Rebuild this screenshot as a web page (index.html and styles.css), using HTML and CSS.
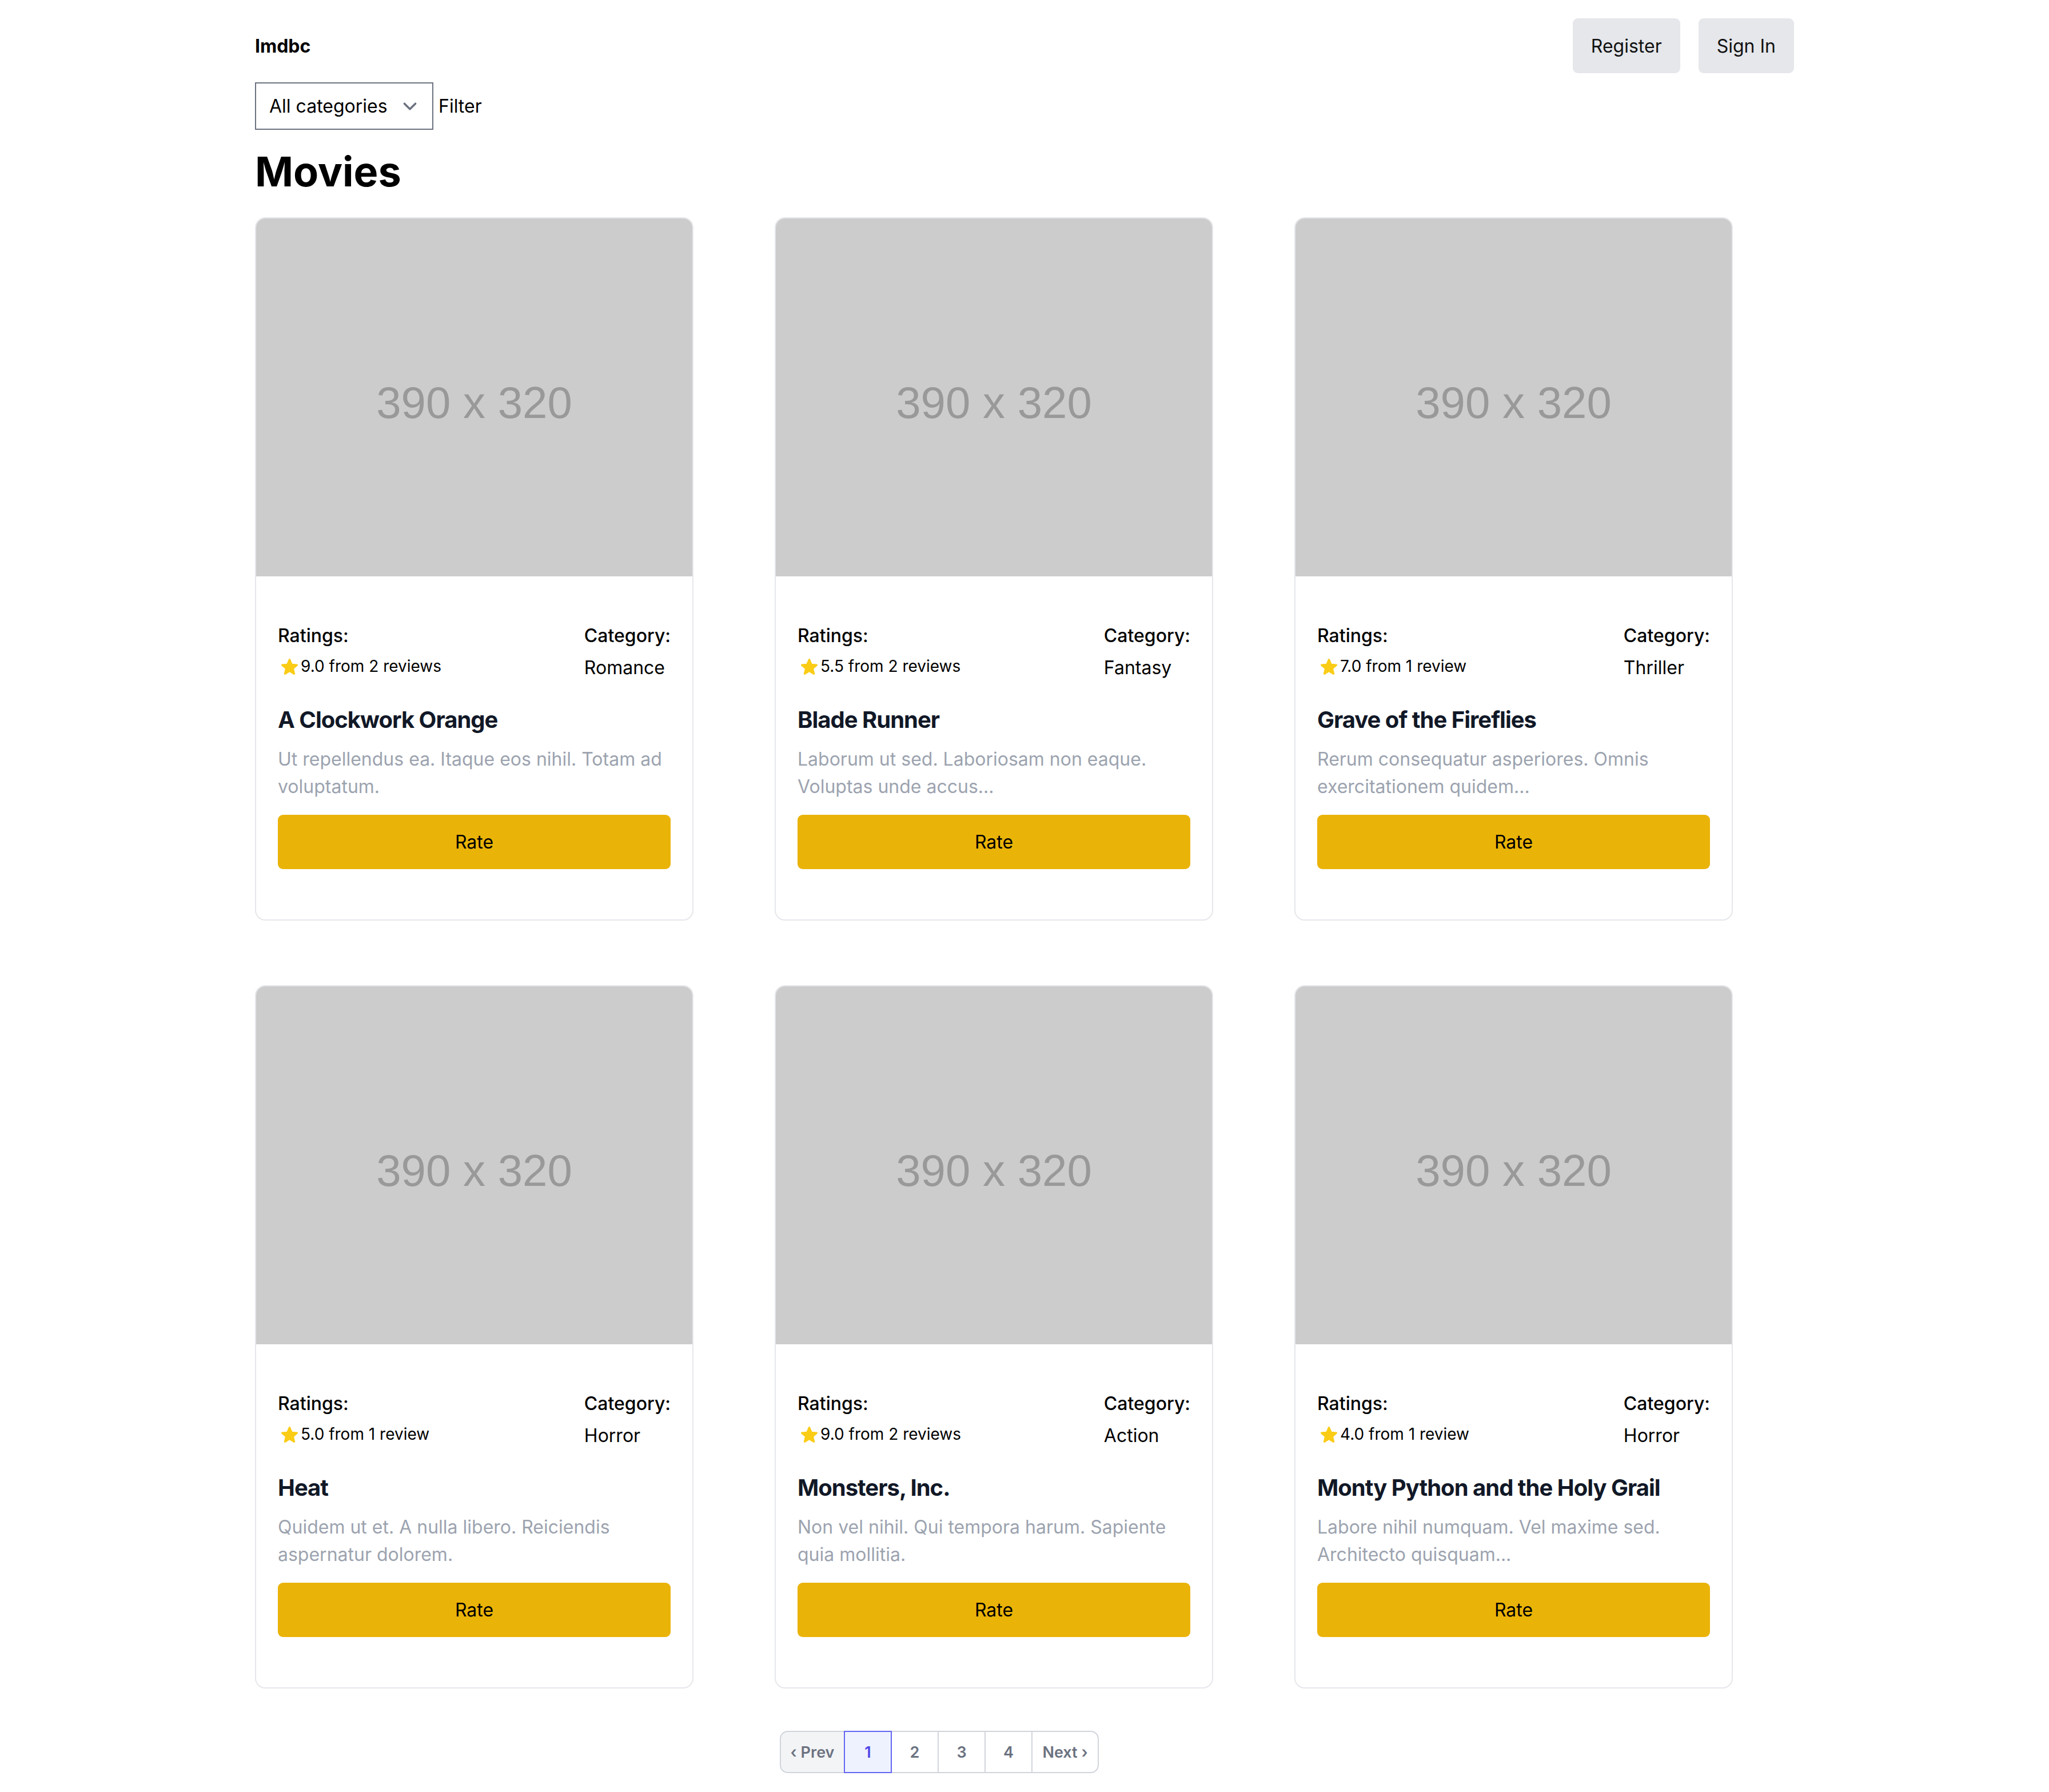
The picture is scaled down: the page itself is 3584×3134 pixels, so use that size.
FILE: index.html
```html
<!DOCTYPE html>
<html lang="en">
<head>
    <meta charset="UTF-8">
    <title>Imdbc</title>
    <link rel="stylesheet" href="styles.css">
</head>
<body>
    <div class="container">
        <div class="header">
            <div class="brand">Imdbc</div>
            <div class="auth">
                <button class="auth-btn">Register</button>
                <button class="auth-btn">Sign In</button>
            </div>
        </div>

        <form class="filter-row">
            <div class="select-wrap">
                <select class="category-select">
                    <option value="">All categories</option>
                    <option value="action">Action</option>
                    <option value="fantasy">Fantasy</option>
                    <option value="horror">Horror</option>
                    <option value="romance">Romance</option>
                    <option value="thriller">Thriller</option>
                </select>
                <svg class="chevron" viewBox="0 0 20 20" fill="none">
                    <path d="M6 8l4 4 4-4" stroke="#6b7280" stroke-width="1.5" stroke-linecap="round" stroke-linejoin="round"/>
                </svg>
            </div>
            <button type="button" class="filter-btn">Filter</button>
        </form>

        <h1 class="page-title">Movies</h1>

        <div class="movie-grid">
            <div class="movie-card">
                <div class="poster">390 x 320</div>
                <div class="card-body">
                    <div class="info">
                        <div>
                            <div class="label">Ratings:</div>
                            <div class="rating">
                                <svg class="star" viewBox="0 0 20 20"><path d="M10.868 2.884c-.321-.772-1.415-.772-1.736 0l-1.83 4.401-4.753.381c-.833.067-1.171 1.107-.536 1.651l3.62 3.102-1.106 4.637c-.194.813.691 1.456 1.405 1.02L10 15.591l4.069 2.485c.713.436 1.598-.207 1.404-1.020l-1.106-4.637 3.62-3.102c.635-.544.297-1.584-.536-1.65l-4.752-.382-1.831-4.401z"/></svg>
                                <span>9.0 from 2 reviews</span>
                            </div>
                        </div>
                        <div>
                            <div class="label">Category:</div>
                            <div class="category">Romance</div>
                        </div>
                    </div>
                    <h2 class="movie-title">A Clockwork Orange</h2>
                    <p class="movie-desc">Ut repellendus ea. Itaque eos nihil. Totam ad voluptatum.</p>
                    <button class="rate-btn">Rate</button>
                </div>
            </div>

            <div class="movie-card">
                <div class="poster">390 x 320</div>
                <div class="card-body">
                    <div class="info">
                        <div>
                            <div class="label">Ratings:</div>
                            <div class="rating">
                                <svg class="star" viewBox="0 0 20 20"><path d="M10.868 2.884c-.321-.772-1.415-.772-1.736 0l-1.83 4.401-4.753.381c-.833.067-1.171 1.107-.536 1.651l3.62 3.102-1.106 4.637c-.194.813.691 1.456 1.405 1.02L10 15.591l4.069 2.485c.713.436 1.598-.207 1.404-1.020l-1.106-4.637 3.62-3.102c.635-.544.297-1.584-.536-1.65l-4.752-.382-1.831-4.401z"/></svg>
                                <span>5.5 from 2 reviews</span>
                            </div>
                        </div>
                        <div>
                            <div class="label">Category:</div>
                            <div class="category">Fantasy</div>
                        </div>
                    </div>
                    <h2 class="movie-title">Blade Runner</h2>
                    <p class="movie-desc">Laborum ut sed. Laboriosam non eaque. Voluptas unde accus...</p>
                    <button class="rate-btn">Rate</button>
                </div>
            </div>

            <div class="movie-card">
                <div class="poster">390 x 320</div>
                <div class="card-body">
                    <div class="info">
                        <div>
                            <div class="label">Ratings:</div>
                            <div class="rating">
                                <svg class="star" viewBox="0 0 20 20"><path d="M10.868 2.884c-.321-.772-1.415-.772-1.736 0l-1.83 4.401-4.753.381c-.833.067-1.171 1.107-.536 1.651l3.62 3.102-1.106 4.637c-.194.813.691 1.456 1.405 1.02L10 15.591l4.069 2.485c.713.436 1.598-.207 1.404-1.020l-1.106-4.637 3.62-3.102c.635-.544.297-1.584-.536-1.65l-4.752-.382-1.831-4.401z"/></svg>
                                <span>7.0 from 1 review</span>
                            </div>
                        </div>
                        <div>
                            <div class="label">Category:</div>
                            <div class="category">Thriller</div>
                        </div>
                    </div>
                    <h2 class="movie-title">Grave of the Fireflies</h2>
                    <p class="movie-desc">Rerum consequatur asperiores. Omnis exercitationem quidem...</p>
                    <button class="rate-btn">Rate</button>
                </div>
            </div>

            <div class="movie-card">
                <div class="poster">390 x 320</div>
                <div class="card-body">
                    <div class="info">
                        <div>
                            <div class="label">Ratings:</div>
                            <div class="rating">
                                <svg class="star" viewBox="0 0 20 20"><path d="M10.868 2.884c-.321-.772-1.415-.772-1.736 0l-1.83 4.401-4.753.381c-.833.067-1.171 1.107-.536 1.651l3.62 3.102-1.106 4.637c-.194.813.691 1.456 1.405 1.02L10 15.591l4.069 2.485c.713.436 1.598-.207 1.404-1.020l-1.106-4.637 3.62-3.102c.635-.544.297-1.584-.536-1.65l-4.752-.382-1.831-4.401z"/></svg>
                                <span>5.0 from 1 review</span>
                            </div>
                        </div>
                        <div>
                            <div class="label">Category:</div>
                            <div class="category">Horror</div>
                        </div>
                    </div>
                    <h2 class="movie-title">Heat</h2>
                    <p class="movie-desc">Quidem ut et. A nulla libero. Reiciendis aspernatur dolorem.</p>
                    <button class="rate-btn">Rate</button>
                </div>
            </div>

            <div class="movie-card">
                <div class="poster">390 x 320</div>
                <div class="card-body">
                    <div class="info">
                        <div>
                            <div class="label">Ratings:</div>
                            <div class="rating">
                                <svg class="star" viewBox="0 0 20 20"><path d="M10.868 2.884c-.321-.772-1.415-.772-1.736 0l-1.83 4.401-4.753.381c-.833.067-1.171 1.107-.536 1.651l3.62 3.102-1.106 4.637c-.194.813.691 1.456 1.405 1.02L10 15.591l4.069 2.485c.713.436 1.598-.207 1.404-1.020l-1.106-4.637 3.62-3.102c.635-.544.297-1.584-.536-1.65l-4.752-.382-1.831-4.401z"/></svg>
                                <span>9.0 from 2 reviews</span>
                            </div>
                        </div>
                        <div>
                            <div class="label">Category:</div>
                            <div class="category">Action</div>
                        </div>
                    </div>
                    <h2 class="movie-title">Monsters, Inc.</h2>
                    <p class="movie-desc">Non vel nihil. Qui tempora harum. Sapiente quia mollitia.</p>
                    <button class="rate-btn">Rate</button>
                </div>
            </div>

            <div class="movie-card">
                <div class="poster">390 x 320</div>
                <div class="card-body">
                    <div class="info">
                        <div>
                            <div class="label">Ratings:</div>
                            <div class="rating">
                                <svg class="star" viewBox="0 0 20 20"><path d="M10.868 2.884c-.321-.772-1.415-.772-1.736 0l-1.83 4.401-4.753.381c-.833.067-1.171 1.107-.536 1.651l3.62 3.102-1.106 4.637c-.194.813.691 1.456 1.405 1.02L10 15.591l4.069 2.485c.713.436 1.598-.207 1.404-1.020l-1.106-4.637 3.62-3.102c.635-.544.297-1.584-.536-1.65l-4.752-.382-1.831-4.401z"/></svg>
                                <span>4.0 from 1 review</span>
                            </div>
                        </div>
                        <div>
                            <div class="label">Category:</div>
                            <div class="category">Horror</div>
                        </div>
                    </div>
                    <h2 class="movie-title">Monty Python and the Holy Grail</h2>
                    <p class="movie-desc">Labore nihil numquam. Vel maxime sed. Architecto quisquam...</p>
                    <button class="rate-btn">Rate</button>
                </div>
            </div>
        </div>

        <!-- pagination -->
        <ul class="pagination">
            <li class="page prev">&lsaquo; Prev</li>
            <li class="page active">1</li>
            <li class="page">2</li>
            <li class="page">3</li>
            <li class="page">4</li>
            <li class="page next">Next &rsaquo;</li>
        </ul>
    </div>
</body>
</html>
```

FILE: styles.css
```css
body {
    margin: 0;
    font-family: Inter, "Noto Sans", sans-serif;
    color: #000;
    background-color: white;
}

.container {
    width: 2692px;
    margin: 0 auto;
    padding-bottom: 33px;
}

.header {
    display: flex;
    justify-content: space-between;
    align-items: center;
    padding-top: 32px;
}

.brand {
    font-size: 32px;
    font-weight: 700;
}

.auth {
    display: flex;
    gap: 32px;
}

.auth-btn {
    height: 96px;
    padding: 0 32px;
    border: none;
    border-radius: 9px;
    background-color: #e5e7eb;
    color: #111;
    font-family: inherit;
    font-size: 32px;
    cursor: pointer;
}

.filter-row {
    display: flex;
    align-items: center;
    margin: 16px 0 0;
}

.select-wrap {
    position: relative;
}

.category-select {
    appearance: none;
    -webkit-appearance: none;
    box-sizing: border-box;
    width: 312px;
    height: 83px;
    padding: 0 60px 0 23px;
    border: 2px solid #6b7280;
    border-radius: 0;
    background-color: white;
    color: #000;
    font-family: inherit;
    font-size: 32px;
}

.chevron {
    position: absolute;
    right: 17px;
    top: 50%;
    width: 48px;
    height: 48px;
    transform: translateY(-50%);
    pointer-events: none;
}

.filter-btn {
    margin-left: 9px;
    padding: 0;
    border: none;
    background: none;
    color: #000;
    font-family: inherit;
    font-size: 32px;
    cursor: pointer;
}

.page-title {
    margin: 33px 0 0;
    font-size: 72px;
    line-height: 80px;
    font-weight: 700;
}

.movie-grid {
    display: grid;
    grid-template-columns: repeat(3, 767px);
    column-gap: 142px;
    row-gap: 113px;
    margin-top: 40px;
}

.movie-card {
    border: 2px solid #e5e7eb;
    border-radius: 18px;
    overflow: hidden;
    background-color: white;
}

.poster {
    display: flex;
    justify-content: center;
    align-items: center;
    box-sizing: border-box;
    height: 626px;
    padding-top: 18px;
    background-color: #cccccc;
    color: #999999;
    font-family: "Liberation Sans", Arial, sans-serif;
    font-size: 78px;
}

.card-body {
    padding: 81px 38px 88px;
}

.info {
    display: flex;
    justify-content: space-between;
}

.label {
    font-size: 32px;
    line-height: 46px;
    font-weight: 500;
}

.rating {
    display: flex;
    align-items: center;
    height: 36px;
    margin-top: 12px;
    font-size: 28px;
    line-height: 36px;
}

.star {
    width: 35px;
    height: 35px;
    margin-left: 3px;
    margin-right: 2px;
    fill: #facc15;
}

.category {
    margin-top: 10px;
    font-size: 32px;
    line-height: 46px;
}

.movie-title {
    margin: 40px 0 0;
    color: #111827;
    font-size: 40px;
    line-height: 56px;
    font-weight: 700;
    letter-spacing: -0.025em;
}

.movie-desc {
    margin: 17px 0 0;
    color: #9ca3af;
    font-size: 32px;
    line-height: 48px;
}

.rate-btn {
    display: block;
    width: 100%;
    height: 95px;
    margin-top: 25px;
    border: none;
    border-radius: 9px;
    background-color: #eab308;
    color: #000;
    font-family: inherit;
    font-size: 32px;
    cursor: pointer;
}

.pagination {
    display: flex;
    margin: 74px 0 0 918px;
    padding: 0;
    list-style: none;
}

.page {
    position: relative;
    box-sizing: border-box;
    width: 84px;
    height: 74px;
    margin-left: -2px;
    display: flex;
    justify-content: center;
    align-items: center;
    border: 2px solid #d1d5db;
    background-color: white;
    color: #6b7280;
    font-size: 27px;
    font-weight: 600;
}

.page.prev {
    width: 114px;
    margin-left: 0;
    border-radius: 14px 0 0 14px;
    background-color: #f3f4f6;
}

.page.next {
    width: 118px;
    border-radius: 0 14px 14px 0;
}

.page.active {
    z-index: 1;
    border-color: #6366f1;
    background-color: #eef2ff;
    color: #4f46e5;
}
```
